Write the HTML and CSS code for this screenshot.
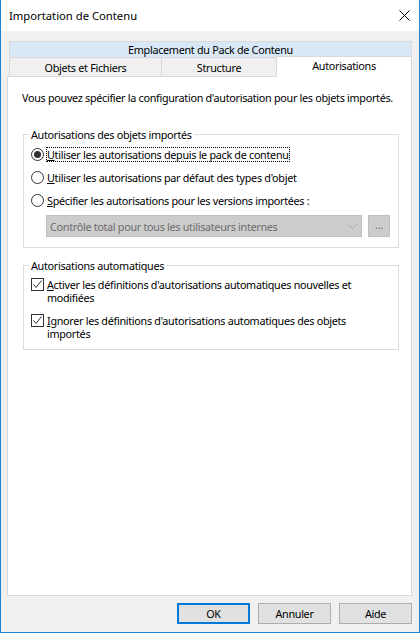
FILE: index.html
```html
<!DOCTYPE html>
<html lang="fr">
<head>
<meta charset="utf-8">
<title>Importation de Contenu</title>
<link rel="stylesheet" href="styles.css">
</head>
<body>
<div class="window">
  <div class="titlebar">
    <span class="title">Importation de Contenu</span>
    <svg class="close" width="11" height="11" viewBox="0 0 11 11"><path d="M0.5 0.5 L10.5 10.5 M10.5 0.5 L0.5 10.5" stroke="#000" stroke-width="1" fill="none"/></svg>
  </div>
  <div class="client">
    <div class="tabs">
      <div class="tabrow tabrow-top">
        <div class="tab tab-blue">Emplacement du Pack de Contenu</div>
      </div>
      <div class="tabrow tabrow-bottom">
        <div class="tab tab-objets">Objets et Fichiers</div>
        <div class="tab tab-structure">Structure</div>
        <div class="tab tab-active">Autorisations</div>
      </div>
    </div>
    <div class="panel">
      <p class="intro">Vous pouvez spécifier la configuration d'autorisation pour les objets importés.</p>
      <fieldset class="group group-perm">
        <legend>Autorisations des objets importés</legend>
        <div class="option option-first">
          <span class="radio radio-checked"></span>
          <span class="label label-focus"><u>U</u>tiliser les autorisations depuis le pack de contenu</span>
        </div>
        <div class="option">
          <span class="radio"></span>
          <span class="label"><u>U</u>tiliser les autorisations par défaut des types d'objet</span>
        </div>
        <div class="option">
          <span class="radio"></span>
          <span class="label"><u>S</u>pécifier les autorisations pour les versions importées :</span>
        </div>
        <div class="combo-row">
          <div class="combo">
            <span class="combo-text">Contrôle total pour tous les utilisateurs internes</span>
            <svg class="chevron" width="9" height="5" viewBox="0 0 9 5"><path d="M0.5 0.5 L4.5 4.5 L8.5 0.5" stroke="#a6a6a6" stroke-width="1" fill="none"/></svg>
          </div>
          <div class="dots-btn">...</div>
        </div>
      </fieldset>
      <fieldset class="group group-auto">
        <legend>Autorisations automatiques</legend>
        <div class="check check-first">
          <span class="box"><svg width="11" height="11" viewBox="0 0 11 11"><path d="M1.5 5.5 L4 8.5 L9.5 1.5" stroke="#333" stroke-width="1" fill="none"/></svg></span>
          <span class="label"><u>A</u>ctiver les définitions d'autorisations automatiques nouvelles et<br>modifiées</span>
        </div>
        <div class="check">
          <span class="box"><svg width="11" height="11" viewBox="0 0 11 11"><path d="M1.5 5.5 L4 8.5 L9.5 1.5" stroke="#333" stroke-width="1" fill="none"/></svg></span>
          <span class="label"><u>I</u>gnorer les définitions d'autorisations automatiques des objets<br>importés</span>
        </div>
      </fieldset>
    </div>
    <div class="buttons">
      <div class="btn btn-default">OK</div>
      <div class="btn">Annuler</div>
      <div class="btn">Aide</div>
    </div>
  </div>
</div>
</body>
</html>
```

FILE: styles.css
```css
* { box-sizing: border-box; }
html, body { margin: 0; padding: 0; }
body {
  width: 420px;
  height: 633px;
  font-family: "Noto Sans", "Open Sans", sans-serif;
  font-size: 10.8px;
  letter-spacing: -0.3px;
  color: #000;
  background: #fff;
}
.window {
  width: 420px;
  height: 633px;
  border: 1px solid #1883d7;
  border-top: 0;
  display: flex;
  flex-direction: column;
}
.titlebar {
  height: 31px;
  background: #fff;
  display: flex;
  align-items: center;
  padding-left: 8px;
  padding-right: 9px;
}
.title {
  flex: 1;
  line-height: 15px;
  font-size: 11.25px;
  letter-spacing: 0;
}
.close { display: block; }
.client {
  flex: 1;
  background: #f0f0f0;
  padding: 10px 7px 8px 6px;
  display: flex;
  flex-direction: column;
}
.tabs { margin-left: 2px; }
.tabrow { display: flex; }
.tabrow-top { height: 17px; }
.tab {
  border: 1px solid #d9d9d9;
  text-align: center;
  line-height: 15px;
}
.tab-blue {
  flex: 1;
  background: #d9e8f7;
  height: 17px;
}
.tabrow-bottom {
  height: 18px;
  align-items: flex-end;
}
.tab-objets, .tab-structure {
  height: 18px;
  border-top: 0;
  border-bottom: 0;
  background: #f0f0f0;
  line-height: 18px;
  padding-top: 1px;
}
.tab-objets { width: 153px; }
.tab-structure { width: 115px; border-left: 0; }
.tab-active {
  flex: 1;
  height: 21px;
  margin-bottom: -1px;
  border-bottom: 0;
  border-left: 0;
  background: #fff;
  position: relative;
  z-index: 1;
  line-height: 17px;
}
.panel {
  flex: 1;
  background: #fff;
  border: 1px solid #d9d9d9;
  padding: 13px 12px 0 14px;
}
.intro {
  margin: 0;
  line-height: 15px;
}
.group {
  margin: 22px 0 0 1px;
  padding: 0 0 9px 7px;
  border: 1px solid #dcdcdc;
}
.group-perm { padding-bottom: 10px; }
.group legend {
  margin-left: -2px;
  padding: 0 2px;
  line-height: 15px;
}
.group-auto { margin-top: 10px; }
.option {
  display: flex;
  align-items: center;
  height: 15px;
  margin-top: 8px;
}
.option-first { margin-top: 5px; }
.radio {
  width: 13px;
  height: 13px;
  border: 1px solid #333;
  border-radius: 50%;
  margin-right: 2px;
  display: flex;
  align-items: center;
  justify-content: center;
  flex-shrink: 0;
}
.radio-checked::after {
  content: "";
  width: 7px;
  height: 7px;
  border-radius: 50%;
  background: #333;
}
.label { line-height: 15px; padding-left: 1px; }
.label u { text-decoration: underline; }
.label-focus {
  outline: 1px dotted #000;
  outline-offset: -1px;
  padding-right: 1px;
}
.combo-row {
  display: flex;
  margin: 7px 0 0 15px;
  gap: 6px;
}
.combo {
  width: 316px;
  height: 22px;
  background: #cccccc;
  border: 1px solid #bfbfbf;
  display: flex;
  align-items: center;
  padding: 0 4px 0 3px;
  color: #6d6d6d;
}
.combo-text { flex: 1; }
.chevron { display: block; }
.dots-btn {
  width: 22px;
  height: 22px;
  background: #cccccc;
  border: 1px solid #bfbfbf;
  color: #6d6d6d;
  text-align: center;
  line-height: 18px;
}
.check {
  display: flex;
  align-items: flex-start;
  margin-top: 10px;
}
.check-first { margin-top: 5px; }
.box {
  width: 13px;
  height: 13px;
  border: 1px solid #333;
  margin-right: 2px;
  flex-shrink: 0;
  display: block;
}
.box svg { display: block; }
.check .label { line-height: 13px; }
.buttons {
  display: flex;
  justify-content: flex-end;
  gap: 8px;
  margin-top: 7px;
  height: 21px;
}
.btn {
  width: 73px;
  height: 21px;
  background: #e1e1e1;
  border: 1px solid #adadad;
  text-align: center;
  line-height: 19px;
}
.btn-default {
  border: 2px solid #0078d7;
  line-height: 17px;
}
```
